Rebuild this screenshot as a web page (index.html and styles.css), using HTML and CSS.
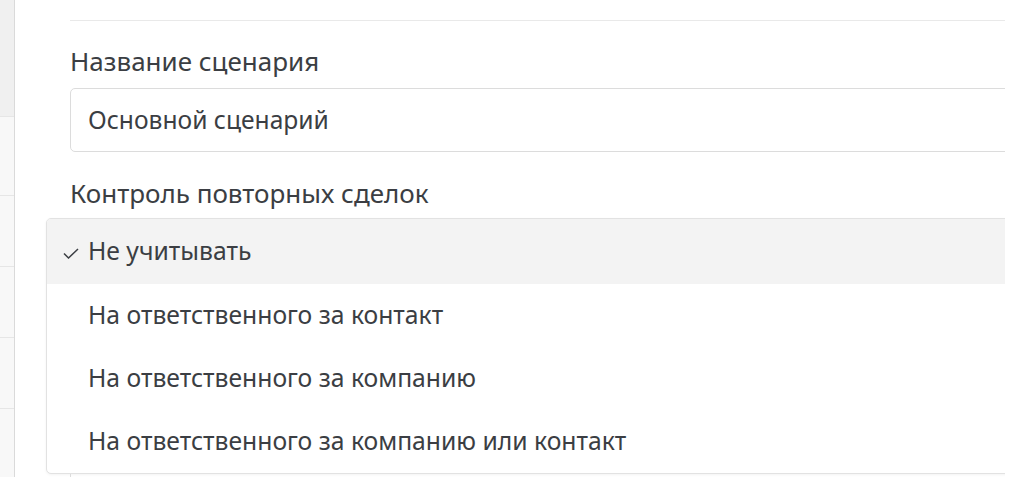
FILE: index.html
```html
<!DOCTYPE html>
<html lang="ru">
<head>
<meta charset="UTF-8">
<meta name="viewport" content="width=device-width, initial-scale=1.0">
<title>Сценарий</title>
<link rel="stylesheet" href="styles.css">
</head>
<body>

  <!-- левая колонка -->
  <div class="sidebar">
    <div class="side-row side-top"></div>
    <div class="side-row"></div>
    <div class="side-row"></div>
    <div class="side-row"></div>
    <div class="side-row"></div>
    <div class="side-row"></div>
  </div>

  <!-- форма сценария -->
  <div class="main">
    <div class="scenario-form">
      <label class="field-label" for="scenario-name">Название сценария</label>
      <input type="text" id="scenario-name" class="text-input" value="Основной сценарий">

      <div class="field-label">Контроль повторных сделок</div>
      <ul class="dropdown">
        <li class="dropdown-item selected">
          <svg class="check" width="16" height="11" viewBox="0 0 16 11"><path d="M1 5.5l4.5 4.5L15 1" fill="none" stroke="#3c3f44" stroke-width="1.5"/></svg>
          Не учитывать
        </li>
        <li class="dropdown-item">На ответственного за контакт</li>
        <li class="dropdown-item">На ответственного за компанию</li>
        <li class="dropdown-item">На ответственного за компанию или контакт</li>
      </ul>
      <div class="next-field"></div>
    </div>
  </div>

</body>
</html>
```

FILE: styles.css
```css
body {
  margin: 0;
  padding: 0;
  height: 100vh;
  display: flex;
  background-color: #fff;
  font-family: "Noto Sans", "Open Sans", sans-serif;
  color: #3b3e43;
  overflow: hidden;
}

.sidebar {
  width: 14px;
  flex-shrink: 0;
  background-color: #f8f8f8;
  border-right: 1px solid #dadada;
}

.side-row {
  height: 70px;
  border-bottom: 1px solid #e6e6e6;
}

.side-top {
  height: 116px;
  background-color: #f0f0f0;
}

.side-row:nth-child(2) {
  height: 78px;
}

.main {
  width: 990px;
  overflow: hidden;
  padding-top: 20px;
}

.scenario-form {
  margin-left: 55px;
  width: 1000px;
  border-top: 1px solid #e9e9e9;
}

.field-label {
  display: block;
  font-size: 26px;
  line-height: 34px;
  margin-top: 23px;
  margin-bottom: 10px;
}

.text-input {
  display: block;
  width: 100%;
  height: 64px;
  box-sizing: border-box;
  padding: 0 17px 2px;
  border: 1px solid #dcdcdc;
  border-radius: 5px;
  font-family: inherit;
  font-size: 24.6px;
  color: #3b3e43;
  outline: none;
}

.text-input + .field-label {
  margin-top: 24px;
  margin-bottom: 8px;
}

.dropdown {
  list-style: none;
  margin: 0 0 0 -24px;
  padding: 0;
  border: 1px solid #e2e2e2;
  border-radius: 5px;
  background-color: #fff;
  box-shadow: 0 1px 3px rgba(0, 0, 0, 0.05);
  overflow: hidden;
}

.dropdown-item {
  display: flex;
  align-items: center;
  box-sizing: border-box;
  height: 63px;
  padding-left: 41px;
  padding-bottom: 2px;
  font-size: 24.7px;
  position: relative;
}

.dropdown-item.selected {
  height: 65px;
  padding-bottom: 3px;
  background-color: #f3f3f3;
}

.check {
  position: absolute;
  left: 16px;
  top: 29px;
}

.next-field {
  height: 10px;
  border-left: 1px solid #dcdcdc;
}
```
